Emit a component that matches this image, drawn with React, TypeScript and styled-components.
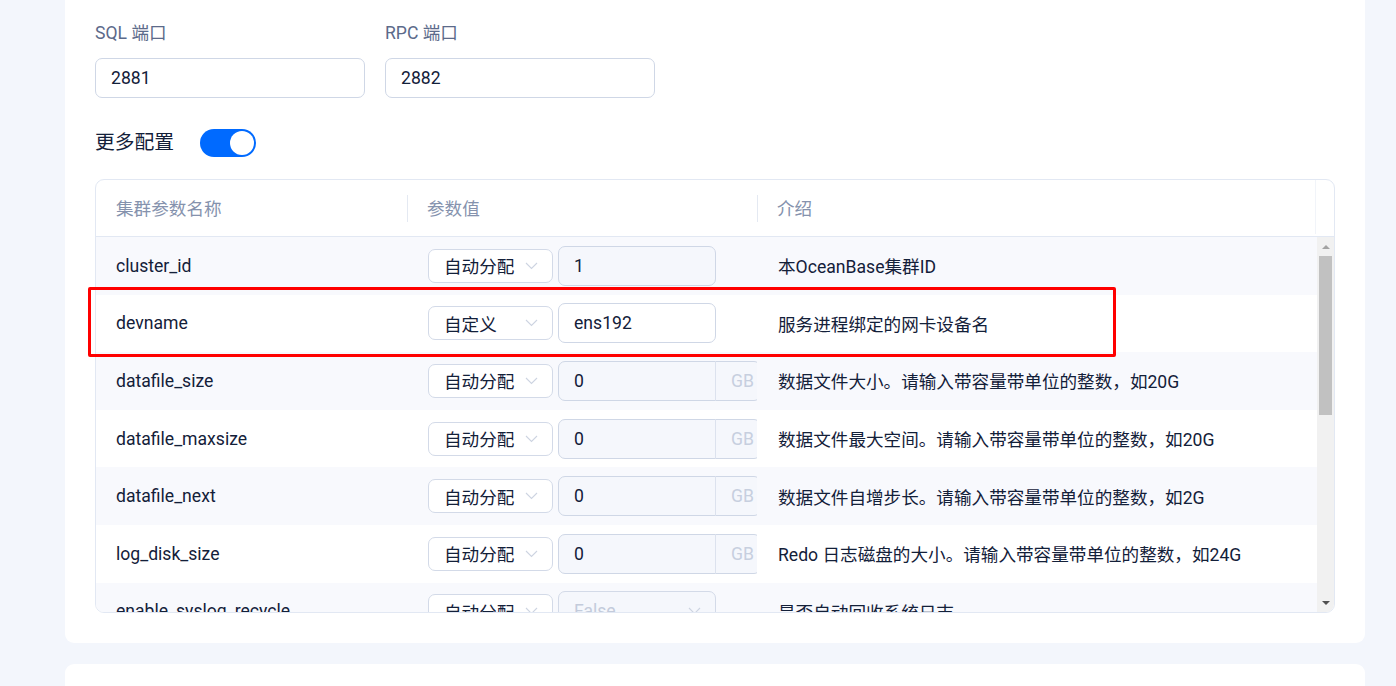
import React from "react";
import styled, { createGlobalStyle } from "styled-components";

const GlobalStyle = createGlobalStyle`
  * { box-sizing: border-box; }
  html, body { margin: 0; padding: 0; background: #f3f6fc; }
  body {
    font-family: Roboto, "Noto Sans CJK SC", sans-serif;
    color: #132039;
    overflow: hidden;
  }
`;

type Param = {
  name: string;
  mode: string;
  kind: "input" | "unit" | "bool";
  value: string;
  disabled?: boolean;
  desc: string;
};

const params: Param[] = [
  { name: "cluster_id", mode: "自动分配", kind: "input", value: "1", disabled: true, desc: "本OceanBase集群ID" },
  { name: "devname", mode: "自定义", kind: "input", value: "ens192", desc: "服务进程绑定的网卡设备名" },
  { name: "datafile_size", mode: "自动分配", kind: "unit", value: "0", disabled: true, desc: "数据文件大小。请输入带容量带单位的整数，如20G" },
  { name: "datafile_maxsize", mode: "自动分配", kind: "unit", value: "0", disabled: true, desc: "数据文件最大空间。请输入带容量带单位的整数，如20G" },
  { name: "datafile_next", mode: "自动分配", kind: "unit", value: "0", disabled: true, desc: "数据文件自增步长。请输入带容量带单位的整数，如2G" },
  { name: "log_disk_size", mode: "自动分配", kind: "unit", value: "0", disabled: true, desc: "Redo 日志磁盘的大小。请输入带容量带单位的整数，如24G" },
  { name: "enable_syslog_recycle", mode: "自动分配", kind: "bool", value: "False", disabled: true, desc: "是否自动回收系统日志" },
  { name: "max_syslog_file_count", mode: "自动分配", kind: "input", value: "0", disabled: true, desc: "系统日志文件的最大数量" },
  { name: "memory_limit", mode: "自动分配", kind: "unit", value: "0", disabled: true, desc: "可用总内存大小。请输入带容量带单位的整数，如8G" },
  { name: "system_memory", mode: "自动分配", kind: "unit", value: "0", disabled: true, desc: "系统预留内存大小。请输入带容量带单位的整数，如22G" },
  { name: "cpu_count", mode: "自动分配", kind: "input", value: "0", disabled: true, desc: "系统CPU总数，如果设置为0，将自动检测" },
  { name: "production_mode", mode: "自动分配", kind: "bool", value: "False", disabled: true, desc: "生产模式开关" },
  { name: "syslog_level", mode: "自动分配", kind: "input", value: "INFO", disabled: true, desc: "系统日志级别" },
  { name: "enable_syslog_wf", mode: "自动分配", kind: "bool", value: "False", disabled: true, desc: "是否把WARN以上级别的系统日志打印到单独的日志文件中" },
];

const ROW_HEIGHT = 57.6;
const BODY_HEIGHT = 375;
const ARROW = 17;

const Page = styled.div`
  width: 1396px;
  height: 686px;
  overflow: hidden;
  padding-left: 65px;
  display: flex;
  flex-direction: column;
  gap: 21px;
`;

const Card = styled.section<{ $cutTop?: boolean }>`
  width: 1300px;
  flex-shrink: 0;
  background: #ffffff;
  border-radius: ${(p) => (p.$cutTop ? "0 0 9px 9px" : "9px")};
  padding: 21px 30px 30px;
  min-height: ${(p) => (p.$cutTop ? "auto" : "200px")};
`;

const FieldRow = styled.div`
  display: flex;
  gap: 20px;
`;

const Field = styled.div`
  width: 270px;
  display: flex;
  flex-direction: column;
  gap: 13px;
`;

const Label = styled.label`
  font-size: 17.6px;
  line-height: 24px;
  color: #5c6a8a;
`;

const TextInput = styled.input<{ $width?: number; $disabled?: boolean; $flat?: boolean }>`
  width: ${(p) => (p.$width ? `${p.$width}px` : "100%")};
  height: 40px;
  flex-shrink: 0;
  border: 1px solid #cfd7e6;
  border-radius: ${(p) => (p.$flat ? "7px 0 0 7px" : "7px")};
  padding: 0 15px;
  font: inherit;
  font-size: 17.6px;
  color: #132039;
  background: ${(p) => (p.$disabled ? "#f5f7fc" : "#ffffff")};
  outline: none;
`;

const SwitchRow = styled.div`
  margin-top: 31px;
  display: flex;
  align-items: center;
  gap: 26px;
  height: 28px;
`;

const SwitchLabel = styled.span`
  font-size: 19.8px;
  line-height: 28px;
  color: #132039;
`;

const Toggle = styled.button<{ $on: boolean }>`
  width: 56px;
  height: 28px;
  border: none;
  border-radius: 14px;
  padding: 2px;
  background: ${(p) => (p.$on ? "#006aff" : "#c7cfdd")};
  display: flex;
  justify-content: ${(p) => (p.$on ? "flex-end" : "flex-start")};
  cursor: pointer;

  &::after {
    content: "";
    width: 24px;
    height: 24px;
    border-radius: 50%;
    background: #ffffff;
  }
`;

const TableFrame = styled.div`
  position: relative;
  margin-top: 22px;
`;

const Table = styled.div`
  border: 1px solid #e2e8f3;
  border-radius: 9px;
  overflow: hidden;
`;

const HeaderRow = styled.div`
  display: grid;
  grid-template-columns: 311px 350px 1fr 19px;
  height: 57px;
  padding-bottom: 2px;
  border-bottom: 1px solid #e2e8f3;
`;

const HeaderCell = styled.div<{ $divider?: boolean }>`
  position: relative;
  display: flex;
  align-items: center;
  padding: 0 20px;
  font-size: 17.6px;
  color: #8592ad;

  &::before {
    content: "";
    display: ${(p) => (p.$divider ? "block" : "none")};
    position: absolute;
    left: 0;
    top: 15px;
    width: 1px;
    height: 27px;
    background: #e4e9f2;
  }
`;

const Gutter = styled.div`
  border-left: 1px solid #f1f4f9;
`;

const Body = styled.div`
  display: flex;
  height: ${BODY_HEIGHT}px;
`;

const Rows = styled.div`
  flex: 1;
  overflow: hidden;
`;

const Scrollbar = styled.div`
  width: 17px;
  flex-shrink: 0;
  display: flex;
  flex-direction: column;
  background: #f1f1f1;
`;

const ScrollArrow = styled.div`
  height: ${ARROW}px;
  flex-shrink: 0;
  display: flex;
  justify-content: center;
`;

const Thumb = styled.div`
  margin: 2px 2px 0;
  background: #c1c1c1;
`;

const Row = styled.div<{ $striped: boolean }>`
  display: grid;
  grid-template-columns: 311px 350px 1fr;
  height: ${ROW_HEIGHT}px;
  background: ${(p) => (p.$striped ? "#f8f9fd" : "#ffffff")};
`;

const Cell = styled.div<{ $pad?: number }>`
  display: flex;
  align-items: center;
  gap: 5px;
  padding-left: ${(p) => p.$pad ?? 20}px;
  overflow: hidden;
  white-space: nowrap;
  font-size: 17.6px;
  color: #132039;
`;

const Select = styled.div<{ $width: number; $height: number; $disabled?: boolean }>`
  width: ${(p) => p.$width}px;
  height: ${(p) => p.$height}px;
  flex-shrink: 0;
  display: flex;
  align-items: center;
  justify-content: space-between;
  padding: 0 14px 0 15px;
  border: 1px solid #d3dae8;
  border-radius: 7px;
  background: ${(p) => (p.$disabled ? "#f5f7fc" : "#ffffff")};
  color: ${(p) => (p.$disabled ? "#c3cbdb" : "#132039")};
  font-size: 17.6px;
`;

const InputGroup = styled.div`
  display: flex;
  flex-shrink: 0;
`;

const Addon = styled.div`
  height: 40px;
  width: 46px;
  display: flex;
  align-items: center;
  padding-left: 15px;
  border: 1px solid #cfd7e6;
  border-left-color: #dce2ee;
  border-radius: 0 7px 7px 0;
  margin-left: -1px;
  background: #f5f7fc;
  color: #c7cfdf;
  font-size: 17.6px;
`;

const Highlight = styled.div`
  position: absolute;
  left: -7px;
  top: 108px;
  width: 1028px;
  height: 70px;
  border: 3px solid #ff0000;
  border-radius: 2px;
  pointer-events: none;
`;

const Chevron = () => (
  <svg width="13" height="8" viewBox="0 0 13 8" fill="none">
    <polyline points="1,1 6.5,6.5 12,1" stroke="#cdd4e1" strokeWidth="1.1" />
  </svg>
);

const ArrowIcon = ({ up }: { up?: boolean }) => (
  <svg width="8" height="4" viewBox="0 0 8 4" style={{ marginTop: up ? 8 : 6 }}>
    <polygon points={up ? "0,4 4,0 8,4" : "0,0 8,0 4,4"} fill={up ? "#a3a3a3" : "#505050"} />
  </svg>
);

const ValueCell = ({ p }: { p: Param }) => (
  <Cell $pad={21}>
    <Select $width={125} $height={34}>
      <span>{p.mode}</span>
      <Chevron />
    </Select>
    {p.kind === "input" && (
      <TextInput $width={158} $disabled={p.disabled} defaultValue={p.value} readOnly={p.disabled} />
    )}
    {p.kind === "unit" && (
      <InputGroup>
        <TextInput $width={158} $disabled $flat defaultValue={p.value} readOnly />
        <Addon>GB</Addon>
      </InputGroup>
    )}
    {p.kind === "bool" && (
      <Select $width={158} $height={40} $disabled>
        <span>{p.value}</span>
        <Chevron />
      </Select>
    )}
  </Cell>
);

export default function App() {
  const track = BODY_HEIGHT - ARROW * 2;
  const thumb = Math.round((track * BODY_HEIGHT) / (params.length * ROW_HEIGHT));

  return (
    <>
      <GlobalStyle />
      <Page>
        <Card $cutTop>
          <FieldRow>
            <Field>
              <Label>SQL 端口</Label>
              <TextInput defaultValue="2881" />
            </Field>
            <Field>
              <Label>RPC 端口</Label>
              <TextInput defaultValue="2882" />
            </Field>
          </FieldRow>
          <SwitchRow>
            <SwitchLabel>更多配置</SwitchLabel>
            <Toggle $on type="button" aria-label="更多配置" />
          </SwitchRow>
          <TableFrame>
            <Table>
              <HeaderRow>
                <HeaderCell>集群参数名称</HeaderCell>
                <HeaderCell $divider>参数值</HeaderCell>
                <HeaderCell $divider>介绍</HeaderCell>
                <Gutter />
              </HeaderRow>
              <Body>
                <Rows>
                  {params.map((p, i) => (
                    <Row key={p.name} $striped={i % 2 === 0}>
                      <Cell>{p.name}</Cell>
                      <ValueCell p={p} />
                      <Cell $pad={21}>{p.desc}</Cell>
                    </Row>
                  ))}
                </Rows>
                <Scrollbar>
                  <ScrollArrow>
                    <ArrowIcon up />
                  </ScrollArrow>
                  <Thumb style={{ height: thumb }} />
                  <div style={{ flex: 1 }} />
                  <ScrollArrow>
                    <ArrowIcon />
                  </ScrollArrow>
                </Scrollbar>
              </Body>
            </Table>
            <Highlight />
          </TableFrame>
        </Card>
        <Card />
      </Page>
    </>
  );
}
